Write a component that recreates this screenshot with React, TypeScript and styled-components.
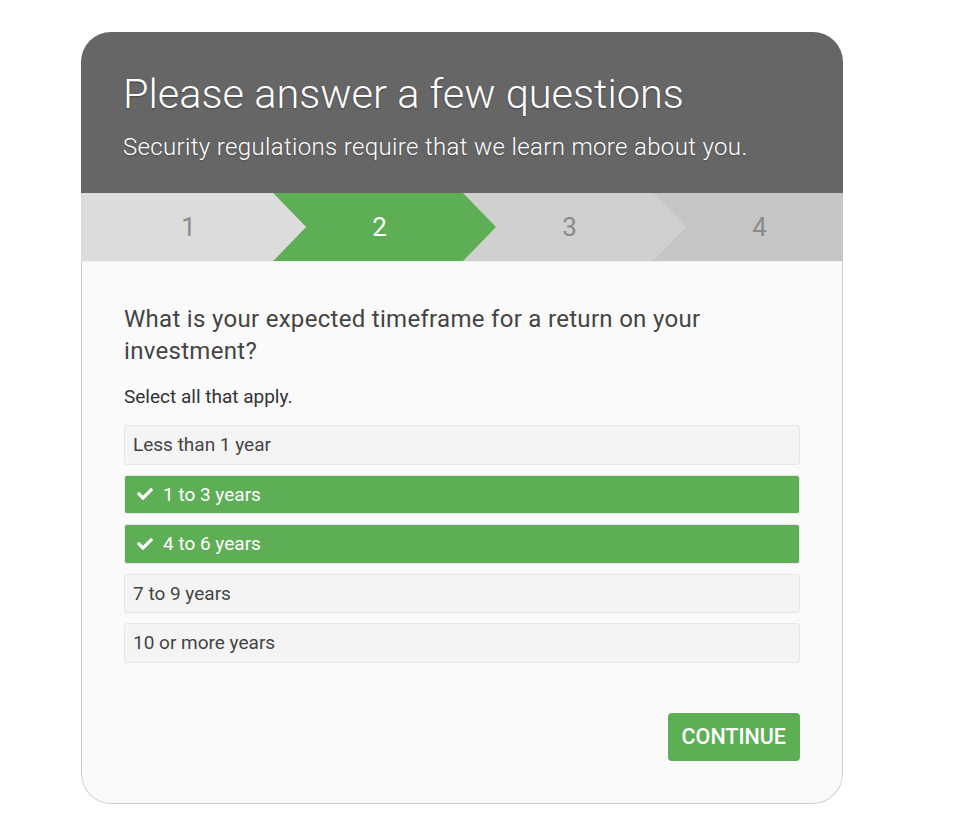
import React, { useState } from 'react';
import styled, { createGlobalStyle } from 'styled-components';
import { FaCheck } from 'react-icons/fa';

const GREEN = '#5eae56';
const ARROW = 33;

const GlobalStyle = createGlobalStyle`
  html, body {
    margin: 0;
    padding: 0;
    background: #ffffff;
    font-family: Roboto, 'Liberation Sans', Arial, sans-serif;
  }
`;

const Page = styled.div`
  padding: 32px 0 40px 81px;
`;

const Card = styled.div`
  width: 762px;
  border-radius: 30px;
  overflow: hidden;
`;

const Header = styled.div`
  background: #666666;
  padding: 36px 42px 29px;
  color: #ffffff;
`;

const Title = styled.h1`
  margin: 0;
  font-size: 41.5px;
  font-weight: 300;
  line-height: 52px;
  text-shadow: 0 1px 2px rgba(0, 0, 0, 0.35);
`;

const Subtitle = styled.p`
  margin: 10px 0 0;
  font-size: 24px;
  font-weight: 300;
  line-height: 34px;
  letter-spacing: 0.35px;
  text-shadow: 0 1px 2px rgba(0, 0, 0, 0.25);
`;

const Steps = styled.div`
  display: flex;
  height: 68px;
  background: #c6c6c6;
  overflow: hidden;
`;

const Step = styled.div<{ $bg: string; $active?: boolean; $first?: boolean; $index: number }>`
  flex: 0 0 ${({ $first }) => ($first ? 225 : 223)}px;
  margin-left: ${({ $first }) => ($first ? 0 : `-${ARROW}px`)};
  display: flex;
  align-items: center;
  justify-content: center;
  padding-right: 10px;
  box-sizing: border-box;
  background: ${({ $bg }) => $bg};
  color: ${({ $active }) => ($active ? '#ffffff' : '#8a8a8a')};
  font-size: 26px;
  font-weight: 400;
  z-index: ${({ $index }) => 10 - $index};
  clip-path: ${({ $first }) =>
    $first
      ? `polygon(0 0, calc(100% - ${ARROW}px) 0, 100% 50%, calc(100% - ${ARROW}px) 100%, 0 100%)`
      : `polygon(0 0, calc(100% - ${ARROW}px) 0, 100% 50%, calc(100% - ${ARROW}px) 100%, 0 100%, ${ARROW}px 50%)`};
`;

const Body = styled.div`
  background: #fafafa;
  border: 1px solid #cccccc;
  border-top: 1px solid #eeeeee;
  border-radius: 0 0 30px 30px;
  padding: 41px 42px 42px;
`;

const Question = styled.h2`
  margin: 0;
  font-size: 24px;
  font-weight: 400;
  line-height: 32px;
  letter-spacing: 0.3px;
  color: #444444;
`;

const Hint = styled.p`
  margin: 16px 0 15px;
  font-size: 19px;
  line-height: 27px;
  color: #333333;
`;

const Options = styled.div`
  display: flex;
  flex-direction: column;
  gap: 10px;
`;

const Option = styled.button<{ $selected: boolean }>`
  display: flex;
  align-items: center;
  gap: 10px;
  height: 39.5px;
  padding: 0 8px;
  border: 1px solid #e6e6e6;
  border-radius: 3px;
  background: ${({ $selected }) => ($selected ? GREEN : '#f4f4f4')};
  color: ${({ $selected }) => ($selected ? '#ffffff' : '#444444')};
  font-family: inherit;
  font-size: 19px;
  text-align: left;
  cursor: pointer;

  svg {
    margin-left: 4px;
    font-size: 16px;
  }
`;

const Footer = styled.div`
  display: flex;
  justify-content: flex-end;
  margin-top: 50px;
`;

const ContinueButton = styled.button`
  height: 48px;
  padding: 0 14px;
  border: none;
  border-radius: 4px;
  background: ${GREEN};
  color: #ffffff;
  font-family: inherit;
  font-size: 21.5px;
  font-weight: 500;
  cursor: pointer;
`;

const stepColors = ['#dcdcdc', GREEN, '#d0d0d0', '#c6c6c6'];

const answers = ['Less than 1 year', '1 to 3 years', '4 to 6 years', '7 to 9 years', '10 or more years'];

const App: React.FC = () => {
  const [selected, setSelected] = useState<Set<string>>(new Set(['1 to 3 years', '4 to 6 years']));

  const toggle = (a: string) => {
    setSelected(prev => {
      const next = new Set(prev);
      if (next.has(a)) next.delete(a);
      else next.add(a);
      return next;
    });
  };

  return (
    <Page>
      <GlobalStyle />
      <Card>
        <Header>
          <Title>Please answer a few questions</Title>
          <Subtitle>Security regulations require that we learn more about you.</Subtitle>
        </Header>
        <Steps>
          {stepColors.map((bg, i) => (
            <Step key={i} $bg={bg} $active={i === 1} $first={i === 0} $index={i}>
              {i + 1}
            </Step>
          ))}
        </Steps>
        <Body>
          <Question>What is your expected timeframe for a return on your investment?</Question>
          <Hint>Select all that apply.</Hint>
          <Options>
            {answers.map(a => (
              <Option key={a} $selected={selected.has(a)} onClick={() => toggle(a)}>
                {selected.has(a) && <FaCheck />}
                {a}
              </Option>
            ))}
          </Options>
          <Footer>
            <ContinueButton>CONTINUE</ContinueButton>
          </Footer>
        </Body>
      </Card>
    </Page>
  );
};

export default App;
